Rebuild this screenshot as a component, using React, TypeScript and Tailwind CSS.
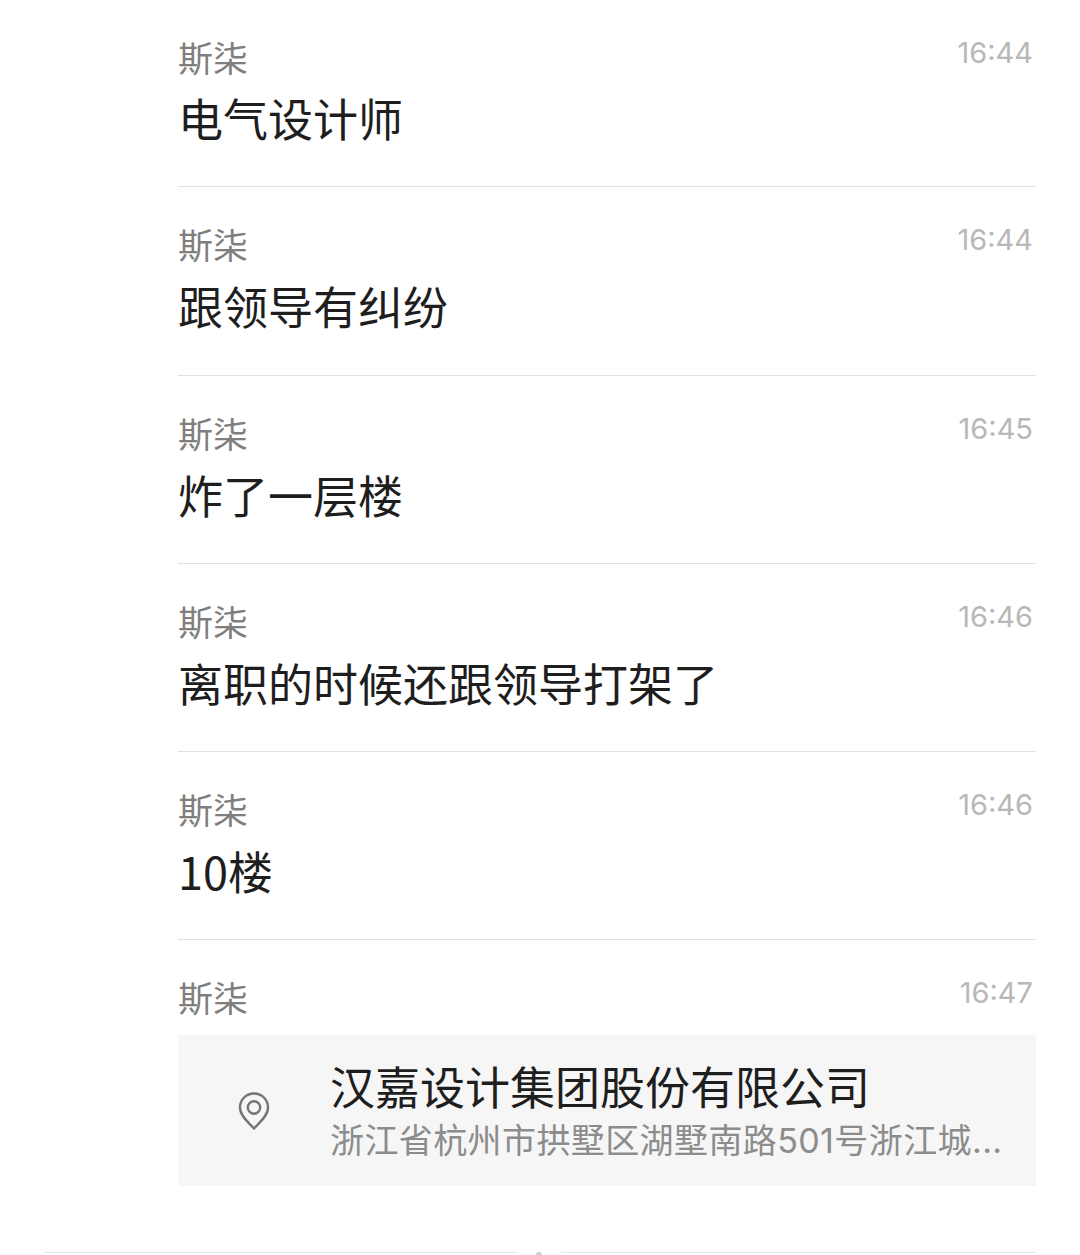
const cjk = "font-['Noto_Sans_CJK_SC','Noto_Sans',sans-serif]";

const messages = [
  { time: "16:44", text: "电气设计师" },
  { time: "16:44", text: "跟领导有纠纷" },
  { time: "16:45", text: "炸了一层楼" },
  { time: "16:46", text: "离职的时候还跟领导打架了" },
  { time: "16:46", text: "10楼" },
];

const Head = ({ time }: { time: string }) => (
  <div className="flex justify-between items-start">
    <span className="text-[35px] leading-[50px] text-[#7f7f7f]">斯柒</span>
    <span className="text-[29px] leading-[40px] pt-[1px] pr-[3px] text-[#b8b8b8] font-['Inter',sans-serif] font-normal">
      {time}
    </span>
  </div>
);

const App = () => {
  return (
    <div className={`w-[1080px] h-[1255px] overflow-hidden bg-white ${cjk}`}>
      <div className="pl-[178px] pr-[44px] pt-[32px]">
        {messages.map((m, i) => (
          <div
            key={i}
            className={`border-b border-[#e2e2e2] ${
              i === 0 ? "h-[155px]" : i === 1 ? "h-[189px] pt-[32px]" : "h-[188px] pt-[32px]"
            }`}
          >
            <Head time={m.time} />
            <div className={`text-[45px] leading-[64px] text-[#1e1e1e] ${i === 0 ? "mt-[4px]" : "mt-[5px]"}`}>
              {m.text}
            </div>
          </div>
        ))}

        <div className="pt-[32px]">
          <Head time="16:47" />
          <div className="mt-[13px] h-[151px] bg-[#f6f6f6] flex items-center">
            <div className="w-[153px] flex justify-center shrink-0 pr-[2px]">
              <svg width="32" height="38" viewBox="0 0 32 38" fill="none" stroke="#767676" strokeWidth="2.4">
                <path d="M16 36.5 C11 31 2 24 2 15.5 C2 7.5 8.2 1.5 16 1.5 C23.8 1.5 30 7.5 30 15.5 C30 24 21 31 16 36.5 Z" />
                <circle cx="16" cy="15.5" r="6.2" />
              </svg>
            </div>
            <div className="min-w-0 flex-1 -ml-px -mt-[3px]">
              <div className="text-[45px] leading-[60px] text-[#1e1e1e] whitespace-nowrap">汉嘉设计集团股份有限公司</div>
              <div className="text-[34px] leading-[44px] mt-[3px] tracking-[0.4px] text-[#8c8c8c] whitespace-nowrap font-['Inter','Noto_Sans_CJK_SC',sans-serif]">
                浙江省杭州市拱墅区湖墅南路501号浙江城...
              </div>
            </div>
          </div>
        </div>

        <div className="-ml-[134px] mt-[66px] flex items-start">
          <div className="w-[473px] h-px bg-[#e4e4e4]" />
          <div className="ml-[19px] w-[6px] h-[4px] rounded-t-full bg-[#cfcfcf]" />
          <div className="ml-[19px] flex-1 h-px bg-[#e4e4e4]" />
        </div>
      </div>
    </div>
  );
};

export default App;
